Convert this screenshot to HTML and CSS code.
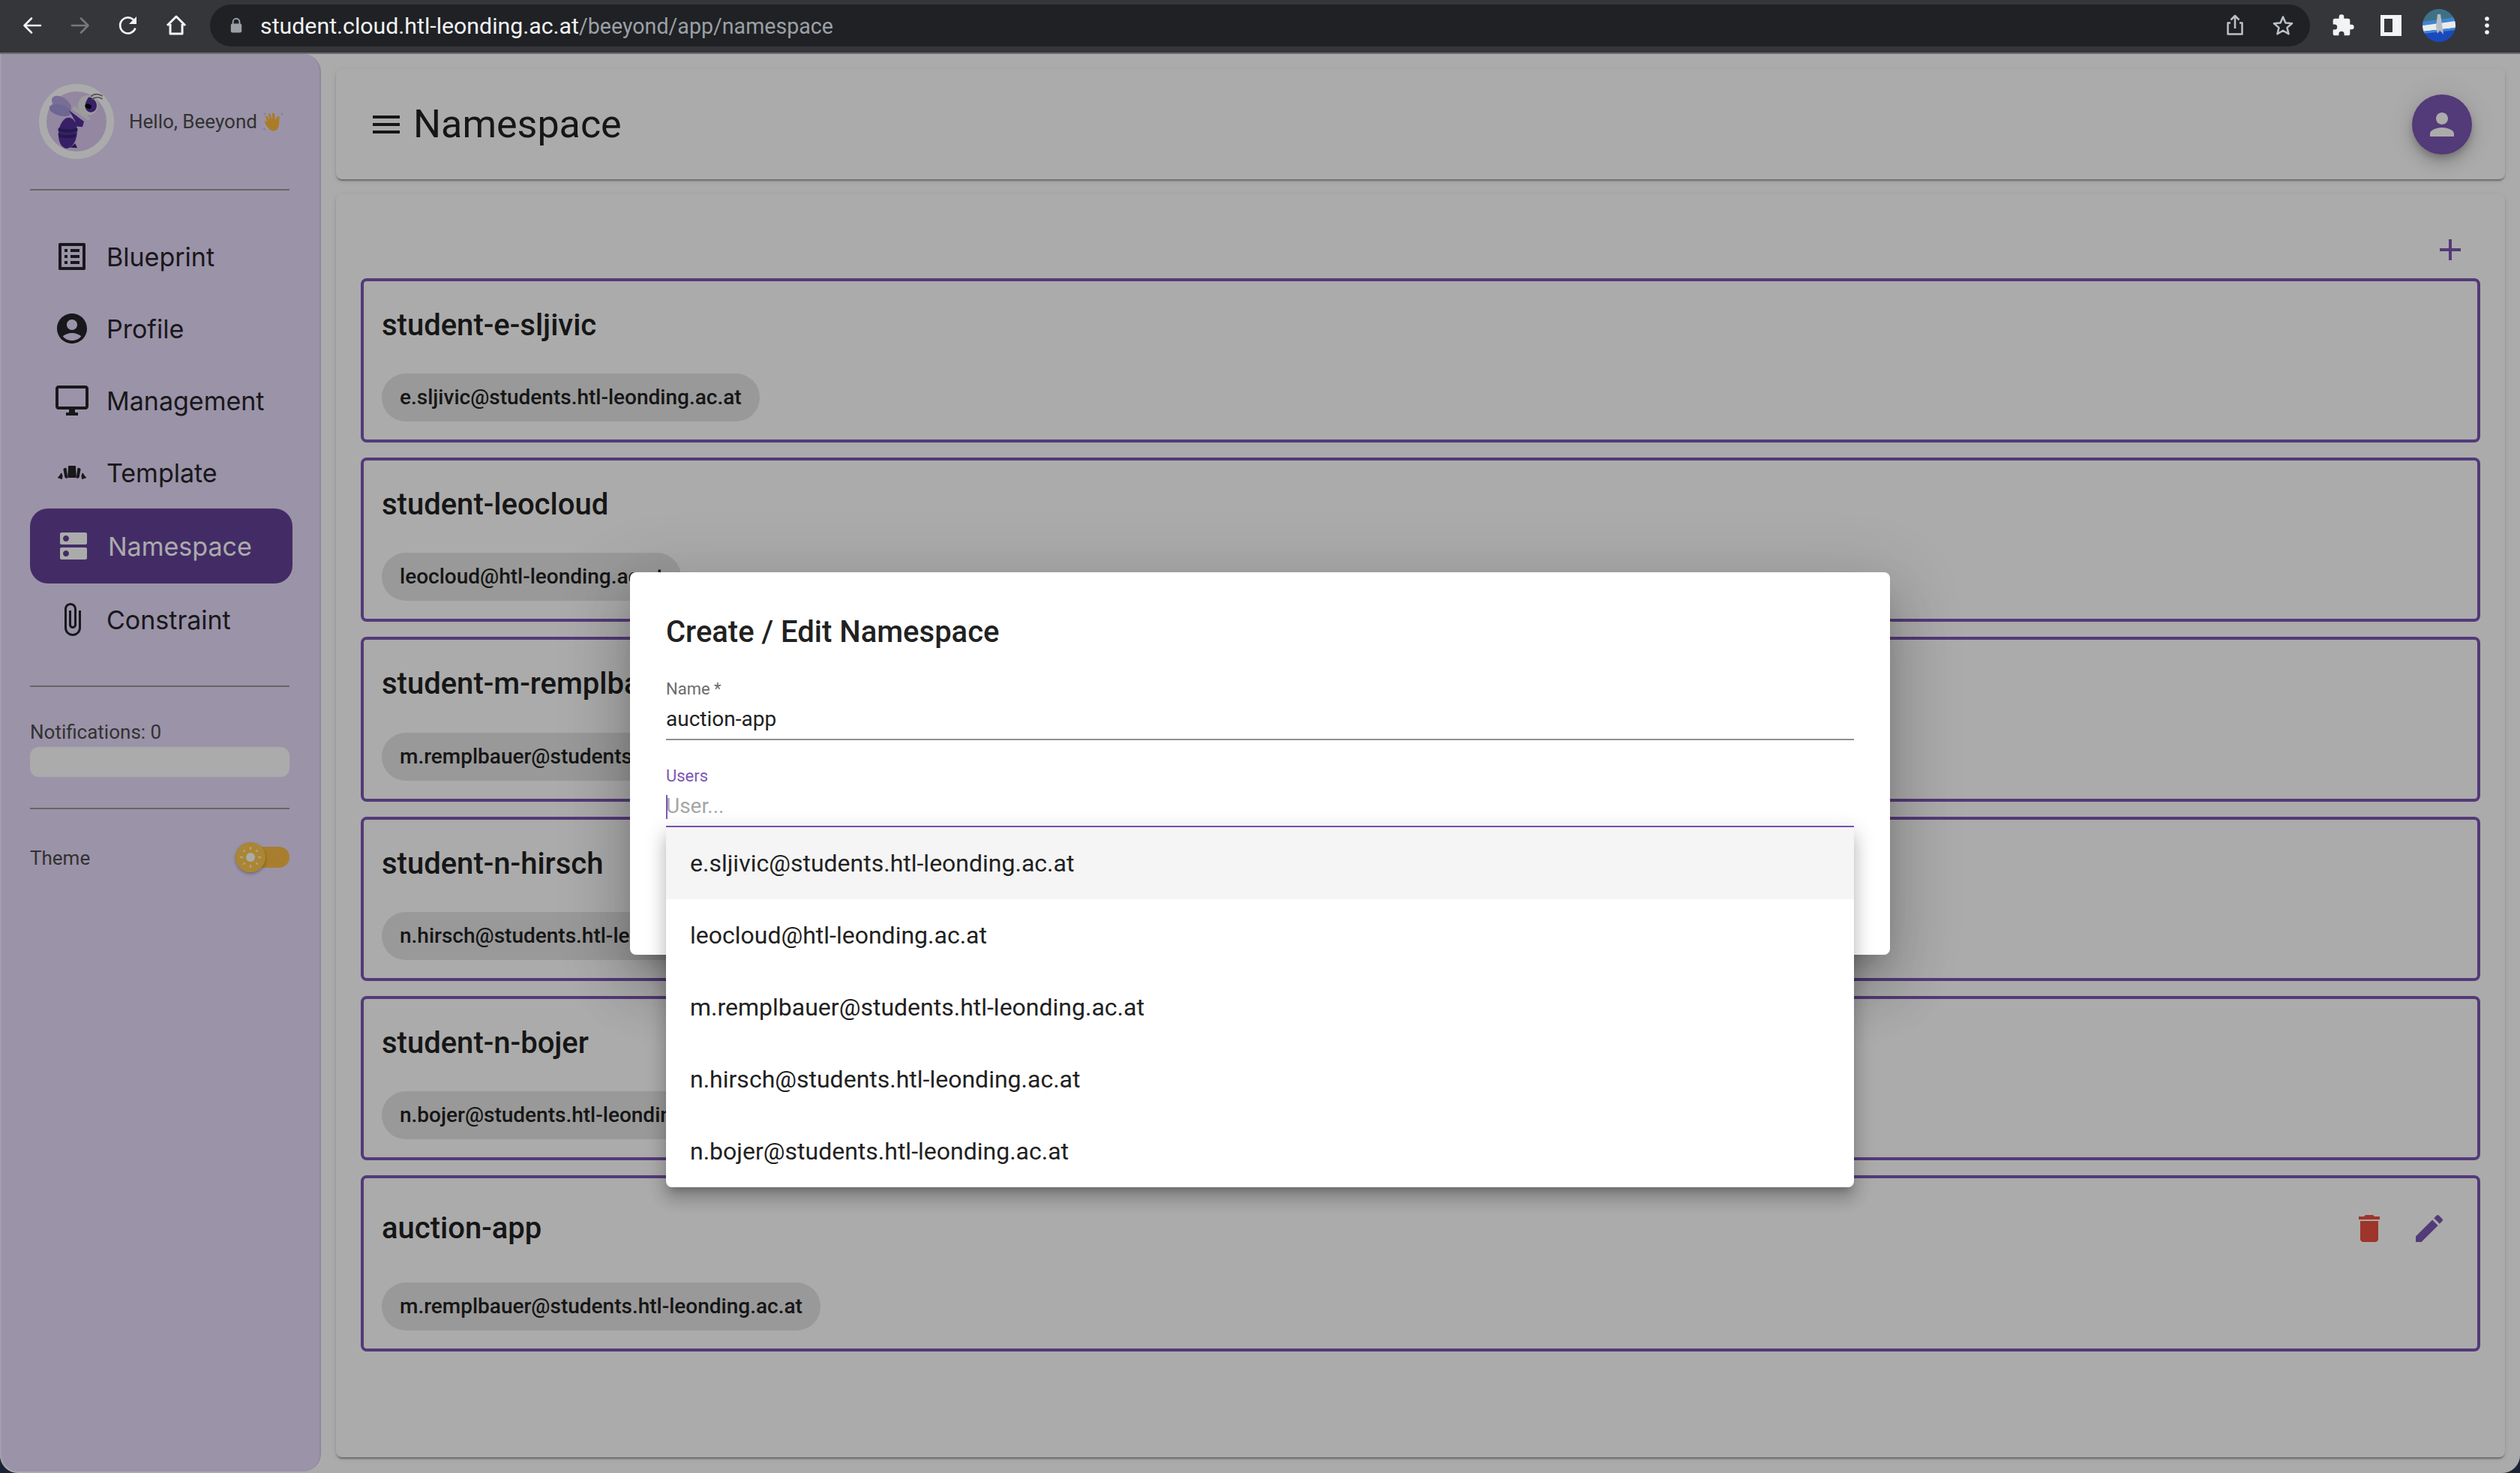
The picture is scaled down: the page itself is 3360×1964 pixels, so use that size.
FILE: index.html
```html
<!DOCTYPE html>
<html lang="en">
<head>
<meta charset="utf-8">
<title>Namespace</title>
<link rel="stylesheet" href="styles.css">
</head>
<body>
<div class="window">
  <header class="chrome">
    <div class="nav-buttons">
      <svg class="cicon" viewBox="0 0 32 32"><path d="M27 16H6M15 6.500 5.500 16l9.500 9.500" fill="none" stroke="#f1f3f4" stroke-width="2.600" stroke-linecap="round" stroke-linejoin="round"/></svg>
      <svg class="cicon" viewBox="0 0 32 32"><path d="M5 16h21M17 6.500l9.500 9.500-9.500 9.500" fill="none" stroke="#77787b" stroke-width="2.600" stroke-linecap="round" stroke-linejoin="round"/></svg>
      <svg class="cicon" viewBox="0 0 32 32"><path d="M25.500 19.500A10.500 10.500 0 1 1 22.500 8L25 10.500" fill="none" stroke="#f1f3f4" stroke-width="2.600"/><path d="M27 4v10H17z" fill="#f1f3f4"/></svg>
      <svg class="cicon" viewBox="0 0 32 32"><path d="M4 16 16 4l12 12M8 14v13h16V14" fill="none" stroke="#f1f3f4" stroke-width="3" stroke-linejoin="round"/></svg>
    </div>
    <div class="omnibox">
      <svg class="lock" viewBox="0 0 20 26"><path d="M4.500 11V7a5.500 5.500 0 0 1 11 0v4" fill="none" stroke="#9aa0a6" stroke-width="2.400"/><rect x="1" y="10" width="18" height="15" rx="2.500" fill="#9aa0a6"/></svg>
      <span class="url"><span class="url-host">student.cloud.htl-leonding.ac.at</span><span class="url-path">/beeyond/app/namespace</span></span>
      <span class="omni-end">
        <svg class="cicon" viewBox="0 0 32 32"><path d="M16 3v17M10.500 8.500 16 3l5.500 5.500M10 12.500H6.500v15h19v-15H22" fill="none" stroke="#bdc1c6" stroke-width="2.500" stroke-linejoin="round"/></svg>
        <svg class="cicon" viewBox="0 0 32 32"><path d="m16 4.500 3.400 8 8.600.7-6.500 5.700 2 8.400-7.500-4.500-7.500 4.500 2-8.400L4 13.200l8.600-.7z" fill="none" stroke="#bdc1c6" stroke-width="2.500" stroke-linejoin="round"/></svg>
      </span>
    </div>
    <div class="chrome-end">
      <svg class="cicon" viewBox="0 0 24 24"><path fill="#f1f3f4" d="M20.500 11H19V7a2 2 0 0 0-2-2h-4V3.500a2.500 2.500 0 0 0-5 0V5H4a2 2 0 0 0-2 2v3.800h1.500a2.700 2.700 0 0 1 0 5.400H2V20a2 2 0 0 0 2 2h3.800v-1.500a2.700 2.700 0 0 1 5.400 0V22H17a2 2 0 0 0 2-2v-4h1.500a2.500 2.500 0 0 0 0-5z"/></svg>
      <svg class="cicon" viewBox="0 0 32 32"><path fill-rule="evenodd" fill="#f1f3f4" d="M2 2h28v28H2zM7 7v18h11V7z"/></svg>
      <svg class="avatar" viewBox="0 0 44 44">
        <defs><clipPath id="avc"><circle cx="22" cy="22" r="22"/></clipPath></defs>
        <g clip-path="url(#avc)">
          <rect width="44" height="44" fill="#1a49bd"/>
          <rect width="44" height="17" fill="#3f7186"/>
          <path d="M0 17 44 11v5L0 22z" fill="#3f86d0"/>
          <path d="M0 22 44 16v9L0 30z" fill="#e8ecef"/>
          <path d="M0 30 44 25v3L0 33z" fill="#3f86d0"/>
          <path d="M20 7h4l4 27-5-6-3 5-2-9z" fill="#b9bcc2"/>
        </g>
      </svg>
      <svg class="cicon" viewBox="0 0 32 32"><circle cx="16" cy="7" r="2.800" fill="#f1f3f4"/><circle cx="16" cy="16" r="2.800" fill="#f1f3f4"/><circle cx="16" cy="25" r="2.800" fill="#f1f3f4"/></svg>
    </div>
  </header>

  <div class="app">
    <aside class="sidebar">
      <div class="brand">
        <svg class="logo" viewBox="0 0 300 300">
          <circle cx="150" cy="150" r="135" fill="#dcc9f2" stroke="#fff" stroke-width="30"/>
          <ellipse cx="90" cy="80" rx="44" ry="26" transform="rotate(35 90 80)" fill="#b3a4e0"/>
          <ellipse cx="85" cy="105" rx="45" ry="22" transform="rotate(15 85 105)" fill="#a498dc"/>
          <path d="M120 105l60 45-6 22-32-3 3-20z" fill="#54319a"/>
          <ellipse cx="115" cy="196" rx="37" ry="62" transform="rotate(6 115 196)" fill="#54319a"/>
          <path d="M78 175c20 8 50 10 75 0l2 12c-25 9-55 8-79 0zM76 198c22 8 50 8 74 1l-4 14c-22 5-46 5-66-1z" fill="#3a2570"/>
          <path d="M125 254l20-16 8 18z" fill="#3a2570"/>
          <path d="M142 88l65 50-8 10-68-48z" fill="#e6e6e6"/>
          <circle cx="196" cy="85" r="40" fill="#eaeaea"/>
          <path d="M200 52c24 6 38 28 28 48-8 18-32 16-40 2-8-16 0-36 12-50z" fill="#54319a"/>
          <ellipse cx="197" cy="89" rx="13" ry="9" transform="rotate(20 197 89)" fill="#050505"/>
          <path d="M208 50c10-12 30-12 46-2M212 62c10-10 24-12 42-2" fill="none" stroke="#777" stroke-width="5"/>
        </svg>
        <span class="greeting">Hello, Beeyond</span>
        <svg class="wave" viewBox="0 0 26 26">
          <path d="M7 22c-3-3-5-7-5-9 0-1.500 1.500-1.500 2.500 0L6 15 3 7c-.5-1.500 1.500-2.500 2.500-1l3 6L7 4c-.3-2 2-2.500 2.700-.7L12 11l0-8c0-2 2.500-2 3-.3l1 8.300 3-4.500c1-1.500 3-.7 2.500 1.200L21 15c0 5-1.500 10-7 10.500-3 .2-5.500-1.500-7-3.500z" fill="#ffb938"/>
          <path d="M1 4 3 2M24 2l2 3M0 22l3 2" stroke="#b9b9b9" stroke-width="1.300" fill="none"/>
        </svg>
      </div>
      <hr class="divider divider-top">
      <nav class="menu">
        <a class="menu-item"><svg class="micon" viewBox="0 0 24 24"><path d="M19 5v14H5V5h14m1.100-2H3.900c-.5 0-.9.4-.9.900v16.200c0 .4.4.9.9.900h16.200c.4 0 .9-.5.9-.9V3.900c0-.5-.5-.9-.9-.9zM11 7h6v2h-6V7zm0 4h6v2h-6v-2zm0 4h6v2h-6zM7 7h2v2H7zm0 4h2v2H7zm0 4h2v2H7z"/></svg><span>Blueprint</span></a>
        <a class="menu-item"><svg class="micon" viewBox="0 0 24 24"><path d="M12 2C6.480 2 2 6.480 2 12s4.480 10 10 10 10-4.480 10-10S17.520 2 12 2zm0 4c1.930 0 3.500 1.570 3.500 3.500S13.930 13 12 13s-3.500-1.570-3.500-3.500S10.070 6 12 6zm0 14c-2.030 0-4.430-.82-6.140-2.880C7.550 15.800 9.680 15 12 15s4.450.8 6.140 2.120C16.430 19.180 14.030 20 12 20z"/></svg><span>Profile</span></a>
        <a class="menu-item"><svg class="micon" viewBox="0 0 24 24"><path d="M21 2H3c-1.100 0-2 .9-2 2v12c0 1.100.9 2 2 2h7v2H8v2h8v-2h-2v-2h7c1.100 0 2-.9 2-2V4c0-1.100-.9-2-2-2zm0 14H3V4h18v12z"/></svg><span>Management</span></a>
        <a class="menu-item"><svg class="micon" viewBox="0 0 24 24"><path d="M10 7.500h4c.3 0 .5.200.5.500l.4 6.900c0 .3-.2.600-.5.600H9.600c-.3 0-.5-.3-.5-.6L9.500 8c0-.3.200-.5.500-.5zM6.200 9.900c0-.3.200-.5.400-.6l1.200-.4c.3-.1.500.1.500.4l.8 6.100c0 .4-.3.600-.6.500l-.9-.3c-.2-.1-.4-.2-.4-.4zM17.800 9.900c0-.3-.2-.5-.4-.6l-1.200-.4c-.3-.1-.5.1-.5.400l-.8 6.100c0 .4.300.6.600.5l.9-.3c.2-.1.400-.2.400-.4zM3.500 14.200l1-1.600c.2-.3.500-.3.700-.1l.6 1.700-.3 1.900c-.1.300-.4.400-.7.300l-1.900-.6c-.3-.1-.4-.5-.2-.8zM20.500 14.200l-1-1.600c-.2-.3-.5-.3-.7-.1l-.6 1.700.3 1.900c.1.300.4.400.7.300l1.900-.6c.3-.1.400-.5.200-.8z"/></svg><span>Template</span></a>
        <a class="menu-item active"><svg class="micon" viewBox="0 0 24 24"><path d="M20 13H4c-.55 0-1 .45-1 1v6c0 .55.45 1 1 1h16c.55 0 1-.45 1-1v-6c0-.55-.45-1-1-1zM7 19c-1.100 0-2-.9-2-2s.9-2 2-2 2 .9 2 2-.9 2-2 2zM20 3H4c-.55 0-1 .45-1 1v6c0 .55.45 1 1 1h16c.55 0 1-.45 1-1V4c0-.55-.45-1-1-1zM7 9c-1.100 0-2-.9-2-2s.9-2 2-2 2 .9 2 2-.9 2-2 2z"/></svg><span>Namespace</span></a>
        <a class="menu-item"><svg class="micon" viewBox="0 0 24 24"><path d="M16.500 6v11.500c0 2.210-1.790 4-4 4s-4-1.790-4-4V5c0-1.380 1.120-2.500 2.500-2.500s2.500 1.120 2.500 2.500v10.500c0 .55-.45 1-1 1s-1-.45-1-1V6H10v9.500c0 1.380 1.120 2.500 2.500 2.500s2.500-1.120 2.500-2.500V5c0-2.210-1.790-4-4-4S7 2.790 7 5v12.500c0 3.040 2.460 5.500 5.500 5.500s5.500-2.460 5.500-5.500V6h-1.500z"/></svg><span>Constraint</span></a>
      </nav>
      <hr class="divider">
      <div class="notifications">
        <span class="side-label">Notifications: 0</span>
        <div class="notif-bar"></div>
      </div>
      <hr class="divider">
      <div class="theme-row">
        <span class="side-label theme-label">Theme</span>
        <span class="switch">
          <span class="switch-thumb">
            <svg viewBox="0 0 40 40"><circle cx="20" cy="20" r="6" fill="#fff"/><g stroke="#fff" stroke-width="2.400" stroke-linecap="round" opacity=".75"><path d="M20 7v2M20 31v2M7 20h2M31 20h2M11 11l1 1M28 28l1 1M11 29l1-1M28 12l1-1"/></g></svg>
          </span>
        </span>
      </div>
    </aside>

    <main class="main">
      <section class="topbar">
        <div class="topbar-title">
          <svg class="micon" viewBox="0 0 24 24"><path d="M3 18h18v-2H3v2zm0-5h18v-2H3v2zm0-7v2h18V6H3z"/></svg>
          <h1>Namespace</h1>
        </div>
        <button class="fab"><svg class="micon" viewBox="0 0 24 24"><path d="M12 12c2.210 0 4-1.790 4-4s-1.790-4-4-4-4 1.790-4 4 1.790 4 4 4zm0 2c-2.670 0-8 1.340-8 4v2h16v-2c0-2.660-5.330-4-8-4z"/></svg></button>
      </section>

      <section class="content">
        <div class="add-row">
          <button class="icon-btn purple"><svg class="micon" viewBox="0 0 24 24"><path d="M19 13h-6v6h-2v-6H5v-2h6V5h2v6h6v2z"/></svg></button>
        </div>
        <div class="ns-list">
          <article class="ns-card">
            <div class="ns-head"><h2>student-e-sljivic</h2></div>
            <div class="chips"><span class="chip">e.sljivic@students.htl-leonding.ac.at</span></div>
          </article>
          <article class="ns-card">
            <div class="ns-head"><h2>student-leocloud</h2></div>
            <div class="chips"><span class="chip">leocloud@htl-leonding.ac.at</span></div>
          </article>
          <article class="ns-card">
            <div class="ns-head"><h2>student-m-remplbauer</h2></div>
            <div class="chips"><span class="chip">m.remplbauer@students.htl-leonding.ac.at</span></div>
          </article>
          <article class="ns-card">
            <div class="ns-head"><h2>student-n-hirsch</h2></div>
            <div class="chips"><span class="chip">n.hirsch@students.htl-leonding.ac.at</span></div>
          </article>
          <article class="ns-card">
            <div class="ns-head"><h2>student-n-bojer</h2></div>
            <div class="chips"><span class="chip">n.bojer@students.htl-leonding.ac.at</span></div>
          </article>
          <article class="ns-card">
            <div class="ns-head">
              <h2>auction-app</h2>
              <div class="ns-actions">
                <button class="icon-btn red"><svg class="micon" viewBox="0 0 24 24"><path d="M6 19c0 1.100.9 2 2 2h8c1.100 0 2-.9 2-2V7H6v12zM19 4h-3.500l-1-1h-5l-1 1H5v2h14V4z"/></svg></button>
                <button class="icon-btn purple"><svg class="micon" viewBox="0 0 24 24"><path d="M3 17.250V21h3.750L17.810 9.940l-3.750-3.750L3 17.250zM20.710 7.040c.39-.39.39-1.020 0-1.410l-2.340-2.340c-.39-.39-1.020-.39-1.410 0l-1.830 1.830 3.750 3.750 1.830-1.830z"/></svg></button>
              </div>
            </div>
            <div class="chips"><span class="chip">m.remplbauer@students.htl-leonding.ac.at</span></div>
          </article>
        </div>
      </section>
    </main>

    <div class="backdrop"></div>

    <div class="dialog">
      <h3 class="dialog-title">Create / Edit Namespace</h3>
      <div class="field">
        <label class="field-label">Name *</label>
        <div class="field-value">auction-app</div>
      </div>
      <div class="field field-focus">
        <label class="field-label">Users</label>
        <div class="field-value placeholder"><span class="caret"></span>User...</div>
        <ul class="options">
          <li class="option hover">e.sljivic@students.htl-leonding.ac.at</li>
          <li class="option">leocloud@htl-leonding.ac.at</li>
          <li class="option">m.remplbauer@students.htl-leonding.ac.at</li>
          <li class="option">n.hirsch@students.htl-leonding.ac.at</li>
          <li class="option">n.bojer@students.htl-leonding.ac.at</li>
        </ul>
      </div>
    </div>
  </div>
</div>
</body>
</html>
```
FILE: styles.css
```css
* { box-sizing: border-box; }
html, body { margin: 0; padding: 0; }
body {
  width: 3360px;
  height: 1964px;
  overflow: hidden;
  background: #1b2436;
  font-family: Roboto, "Liberation Sans", sans-serif;
  color: #212121;
}
h1, h2, h3, ul { margin: 0; padding: 0; }
button { border: 0; background: none; padding: 0; font: inherit; }
.window { display: flex; flex-direction: column; height: 100%; }

/* browser bar */
.chrome {
  height: 72px;
  flex: none;
  background: #35363a;
  border-bottom: 2px solid #6c6d71;
  display: flex;
  align-items: center;
  padding-bottom: 2px;
}
.cicon { width: 32px; height: 32px; display: block; flex: none; }
.nav-buttons { width: 280px; padding-left: 27px; display: flex; gap: 32px; flex: none; }
.omnibox {
  width: 2800px;
  height: 56px;
  background: #202124;
  border-radius: 28px;
  display: flex;
  align-items: center;
  padding-left: 27px;
  flex: none;
}
.lock { width: 16px; height: 22px; margin-right: 24px; flex: none; }
.url { font-size: 30px; white-space: nowrap; }
.url-host { color: #f1f3f4; font-size: 30.300px; }
.url-path { color: #9aa0a6; font-size: 28.600px; }
.omni-end { margin-left: auto; display: flex; gap: 32px; padding-right: 20px; }
.chrome-end { flex: 1; display: flex; align-items: center; padding-left: 28px; gap: 32px; }
.avatar { width: 44px; height: 44px; flex: none; margin-left: -6px; }
.chrome-end .cicon:last-child { margin-left: -6px; }

/* app */
.app {
  position: relative;
  flex: 1;
  min-height: 0;
  display: flex;
  background: #fff;
  border-radius: 0 0 24px 24px;
  overflow: hidden;
}
.sidebar {
  width: 428px;
  flex: none;
  background: #e8dcfb;
  border-radius: 0 24px 24px 24px;
  border-left: 2px solid #f3ecff;
  border-right: 2px solid #d6cbe8;
  margin-bottom: 2px;
  padding: 38px 40px 0 38px;
  display: flex;
  flex-direction: column;
}
.brand { display: flex; align-items: center; height: 104px; margin-left: 10px; margin-right: -40px; }
.logo { width: 100px; height: 100px; flex: none; margin-left: 2px; }
.greeting { font-size: 26px; color: #4b4b4b; margin-left: 20px; white-space: nowrap; }
.wave { width: 26px; height: 26px; margin-left: 8px; flex: none; }
.divider { border: 0; height: 2px; background: #999; margin: 0; flex: none; }
.divider-top { margin-top: 38px; }
.menu { display: flex; flex-direction: column; margin: 40px 0 40px; }
.menu-item {
  height: 96px;
  display: flex;
  align-items: center;
  gap: 22px;
  padding-left: 32px;
  font-family: Inter, Roboto, sans-serif;
  font-size: 34px;
  color: #24242a;
}
.micon { width: 48px; height: 48px; display: block; fill: currentColor; flex: none; }
.menu-item.active {
  height: 100px;
  background: #644298;
  color: #fff;
  border-radius: 24px;
  padding-left: 34px;
  margin-right: -4px;
}
.notifications { margin-top: 42px; display: flex; flex-direction: column; gap: 2px; }
.side-label { font-size: 26px; color: #4b4b4b; line-height: 36px; }
.theme-label { padding-top: 2px; }
.notif-bar { height: 40px; border-radius: 12px; background: #fff; }
.notifications + .divider { margin-top: 41px; }
.theme-row { display: flex; align-items: center; justify-content: space-between; margin-top: 42px; height: 44px; }
.switch {
  position: relative;
  width: 72px;
  height: 28px;
  border-radius: 14px;
  background: #fbbd45;
}
.switch-thumb {
  position: absolute;
  left: 0;
  top: -6px;
  width: 40px;
  height: 40px;
  border-radius: 50%;
  background: #ffc84d;
  box-shadow: 0 2px 4px rgba(0,0,0,.3);
}
.switch-thumb svg { width: 40px; height: 40px; display: block; }

/* main */
.main {
  flex: 1;
  min-width: 0;
  display: flex;
  flex-direction: column;
  gap: 20px;
  padding: 20px 20px 21px 20px;
}
.topbar {
  height: 147px;
  flex: none;
  background: #fff;
  border-radius: 8px;
  box-shadow: 0 4px 2px -2px rgba(0,0,0,.2), 0 2px 2px 0 rgba(0,0,0,.14), 0 2px 6px 0 rgba(0,0,0,.12);
  display: flex;
  align-items: center;
  justify-content: space-between;
  padding: 0 44px 0 43px;
}
.topbar-title { display: flex; align-items: center; gap: 12px; }
.topbar-title .micon { fill: #212121; }
h1 { font-size: 52px; font-weight: 400; color: #212121; }
.fab {
  width: 80px;
  height: 80px;
  border-radius: 50%;
  background: #7c57b3;
  color: #fff;
  display: flex;
  align-items: center;
  justify-content: center;
  box-shadow: 0 6px 10px -2px rgba(0,0,0,.2), 0 12px 20px 0 rgba(0,0,0,.14), 0 2px 36px 0 rgba(0,0,0,.12);
}
.content {
  flex: 1;
  min-height: 0;
  background: #fff;
  border-radius: 8px;
  box-shadow: 0 4px 2px -2px rgba(0,0,0,.2), 0 2px 2px 0 rgba(0,0,0,.14), 0 2px 6px 0 rgba(0,0,0,.12);
  padding: 34px 33px 0;
}
.add-row { display: flex; justify-content: flex-end; margin-bottom: -2px; }
.icon-btn { width: 80px; height: 80px; display: flex; align-items: center; justify-content: center; }
.icon-btn.purple { color: #7c57b3; }
.icon-btn.red { color: #ea4f3f; }
.ns-list { display: flex; flex-direction: column; gap: 20px; }
.ns-card {
  border: 4px solid #7c57b3;
  border-radius: 8px;
  padding: 27px 24px 24px;
  display: flex;
  flex-direction: column;
  gap: 32.200px;
}
.ns-head { display: flex; align-items: center; justify-content: space-between; }
h2 { font-size: 40px; font-weight: 500; line-height: 64px; color: #212121; }
.ns-actions { display: flex; }
.chips { display: flex; }
.chip {
  height: 64px;
  line-height: 64px;
  padding: 0 24px;
  border-radius: 32px;
  background: #e4e4e4;
  font-size: 28px;
  font-weight: 500;
  color: #212121;
  white-space: nowrap;
}

/* modal */
.backdrop { position: absolute; inset: 0; background: rgba(0,0,0,.33); }
.dialog {
  position: absolute;
  left: 840px;
  top: 691px;
  width: 1680px;
  height: 510px;
  background: #fff;
  border-radius: 8px;
  padding: 48px 48px 0;
  box-shadow: 0 22px 30px -14px rgba(0,0,0,.2), 0 48px 76px 6px rgba(0,0,0,.14), 0 18px 92px 16px rgba(0,0,0,.12);
}
.dialog-title { font-size: 40px; font-weight: 500; line-height: 64px; color: #212121; margin-bottom: 30px; }
.field { position: relative; border-bottom: 2px solid #8f8f8f; padding-bottom: 7px; margin-bottom: 34px; }
.field-label { display: block; font-size: 22px; line-height: 28px; color: #6b6b6b; margin-bottom: 7px; }
.field-value { font-size: 28px; line-height: 38px; color: #212121; height: 38px; position: relative; }
.field-focus { border-bottom-color: #7c57b3; margin-bottom: 0; }
.field-focus .field-label { color: #7c57b3; }
.placeholder { color: #a6a6a6; }
.caret { position: absolute; left: 0; top: 4px; width: 2px; height: 32px; background: #7c57b3; }
.options {
  position: absolute;
  left: 0;
  right: 0;
  top: calc(100% + 2px);
  list-style: none;
  background: #fff;
  border-radius: 0 0 8px 8px;
  box-shadow: 0 10px 10px -6px rgba(0,0,0,.2), 0 16px 20px 2px rgba(0,0,0,.14), 0 6px 28px 4px rgba(0,0,0,.12);
}
.option { height: 96px; line-height: 96px; padding-left: 32px; font-size: 32px; color: #212121; }
.option.hover { background: #f5f5f5; }
```
